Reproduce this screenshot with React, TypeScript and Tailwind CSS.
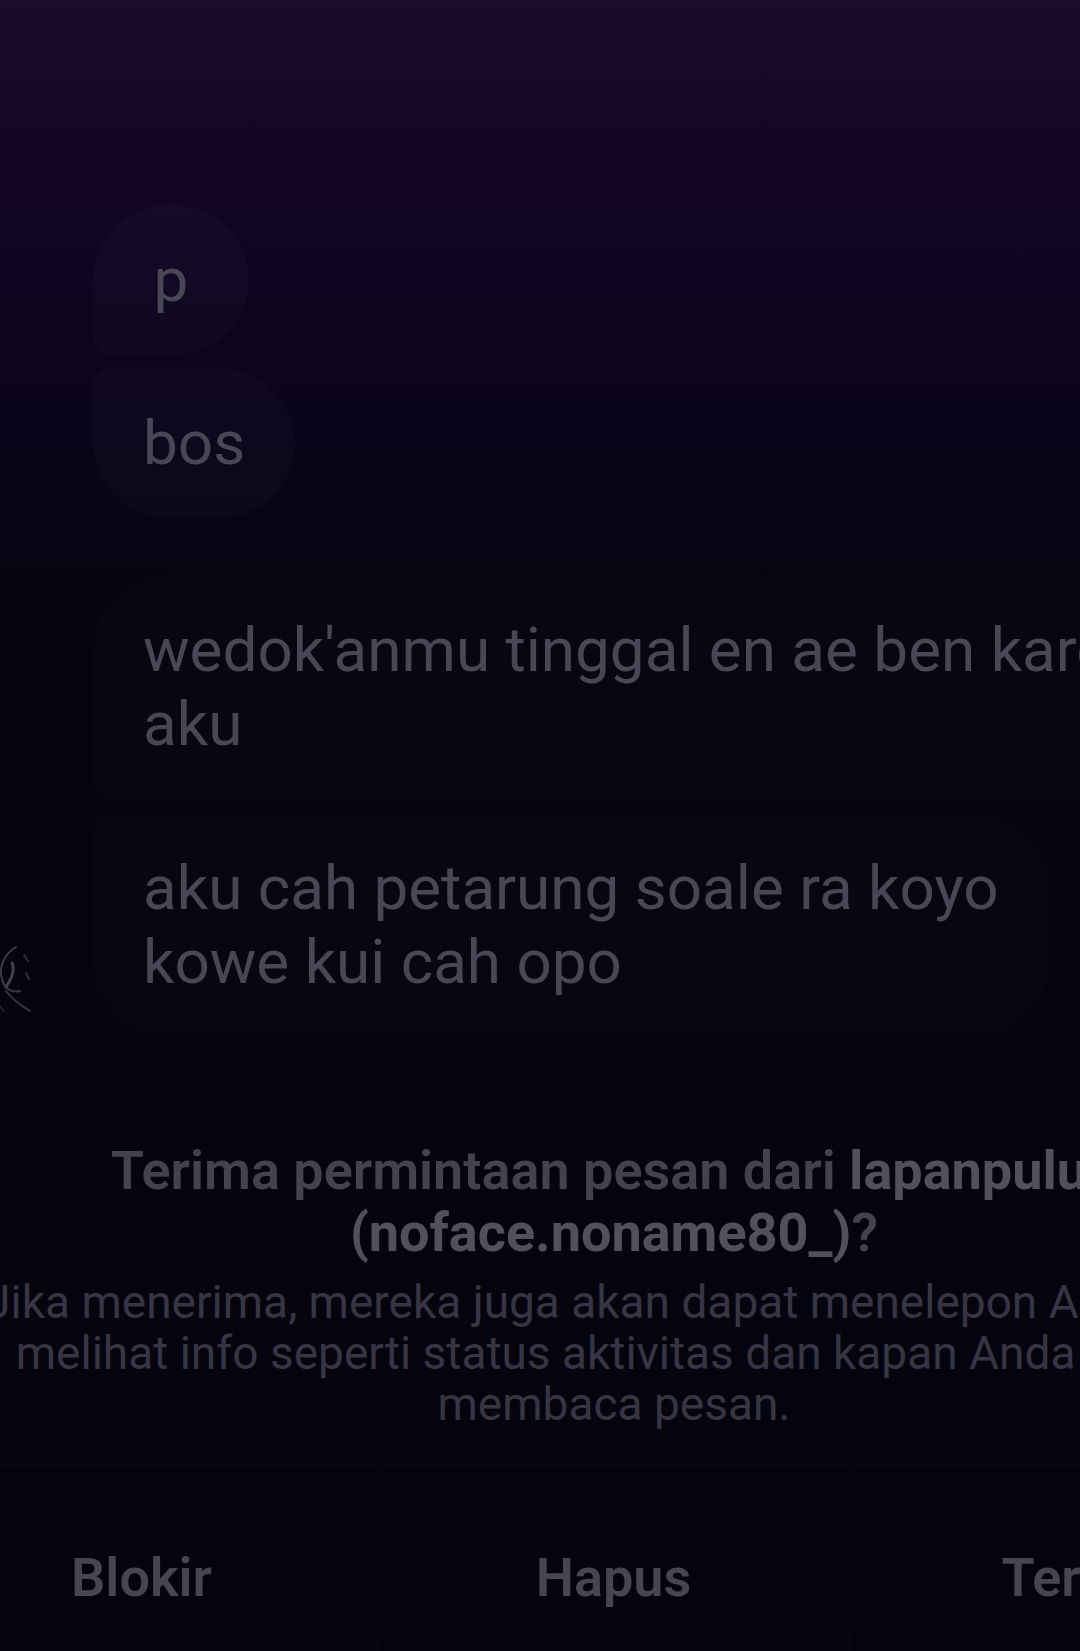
import React from "react";

const messages = [
  { id: "p", lines: ["p"], shape: "rounded-[76px] rounded-bl-[18px]" },
  { id: "bos", lines: ["bos"], shape: "rounded-[76px] rounded-tl-[18px]" },
];

const longMessages = [
  {
    id: "m1",
    lines: ["wedok'anmu tinggal en ae ben karo", "aku"],
    shape: "rounded-[76px] rounded-bl-[18px]",
  },
  {
    id: "m2",
    lines: ["aku cah petarung soale ra koyo", "kowe kui cah opo"],
    shape: "rounded-[76px] rounded-tl-[18px]",
  },
];

function Avatar() {
  // faint sketch of the sender's profile picture
  return (
    <svg width="96" height="96" viewBox="0 0 96 96" fill="none" className="opacity-40">
      <path d="M40 6 C30 12 22 24 26 38 C28 48 36 52 44 50" stroke="#8a8aa0" strokeWidth="2" strokeLinecap="round" />
      <path d="M36 22 C40 30 34 40 30 46" stroke="#9a9ab0" strokeWidth="3" strokeLinecap="round" />
      <path d="M30 50 C36 58 44 64 54 70" stroke="#7a7a90" strokeWidth="2" strokeLinecap="round" />
      <path d="M48 14 L52 20 M50 32 L53 38" stroke="#6a6a80" strokeWidth="2" strokeLinecap="round" />
      <path d="M22 56 C20 62 24 66 28 70" stroke="#5a5a70" strokeWidth="1.5" strokeLinecap="round" />
    </svg>
  );
}

function Bubble({ lines, shape, bg }: { lines: string[]; shape: string; bg: string }) {
  return (
    <div
      className={`${shape} ${bg} min-w-[156px] text-center px-[50px] py-[38px] text-[62px] leading-[74px] text-[#494755] whitespace-nowrap`}
    >
      {lines.map((l, i) => (
        <div key={i} className={lines.length > 1 ? "text-left" : ""}>
          {l}
        </div>
      ))}
    </div>
  );
}

export default function App() {
  return (
    <div className="w-[1080px] h-[1651px] overflow-hidden bg-[linear-gradient(180deg,#1b0b2c_0%,#140726_8%,#0e0520_17%,#090418_28%,#06040f_38%,#05040e_100%)] font-['Roboto',sans-serif]">
      <div className="w-[1416px] ml-[-94px] flex flex-col">
        {/* chat */}
        <div className="flex flex-col pt-[205px] pl-[70px]">
          <div className="flex flex-col gap-[13px]">
            {messages.map((m) => (
              <div key={m.id} className="flex items-end gap-[21px]">
                <div className="w-[96px] shrink-0" />
                <Bubble lines={m.lines} shape={m.shape} bg="bg-[#ffffff05]" />
              </div>
            ))}
          </div>
          <div className="flex flex-col gap-[14px] mt-[57px]">
            {longMessages.map((m, i) => (
              <div key={m.id} className="flex items-end gap-[21px]">
                <div className="w-[96px] h-[96px] shrink-0">{i === 1 && <Avatar />}</div>
                <Bubble lines={m.lines} shape={m.shape} bg="bg-[#ffffff03]" />
              </div>
            ))}
          </div>
        </div>

        {/* request prompt */}
        <div className="mt-[103px] flex flex-col items-center text-center">
          <div className="text-[54px] leading-[62px] font-semibold text-[#44424e] whitespace-nowrap">
            <div>
              Terima permintaan pesan dari <span className="font-bold text-[#53505d]">lapanpuluh</span>
            </div>
            <div>
              <span className="font-bold text-[#53505d]">(noface.noname80_)</span>?
            </div>
          </div>
          <div className="mt-[13px] text-[46px] leading-[51px] text-[#373543] whitespace-nowrap">
            <div>Jika menerima, mereka juga akan dapat menelepon Anda dan</div>
            <div>melihat info seperti status aktivitas dan kapan Anda sudah</div>
            <div>membaca pesan.</div>
          </div>
        </div>

        {/* actions */}
        <div className="mt-[34px] grid grid-cols-3 border-t border-[#0a0917] h-[226px] text-[54px] font-semibold text-[#484553]">
          <div className="flex items-center justify-center border-r border-[#0d0714]">Blokir</div>
          <div className="flex items-center justify-center border-r border-[#0d0714]">Hapus</div>
          <div className="flex items-center justify-center">Terima</div>
        </div>
      </div>
    </div>
  );
}
